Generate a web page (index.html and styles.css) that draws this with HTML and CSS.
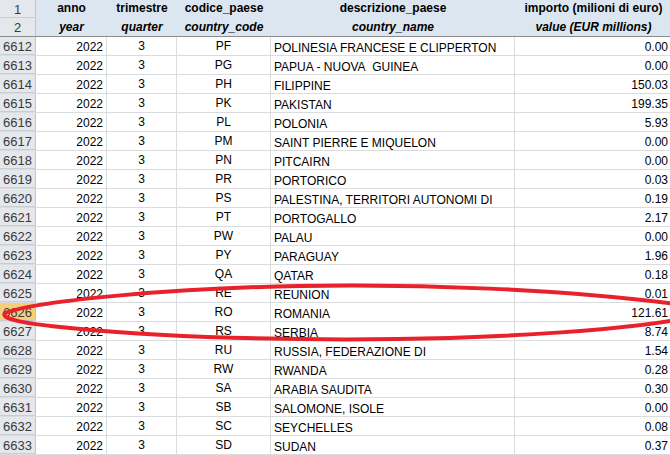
FILE: index.html
```html
<!DOCTYPE html>
<html>
<head>
<meta charset="utf-8">
<link rel="stylesheet" href="styles.css">
</head>
<body>
<div class="sheet">
  <div class="row head h1">
    <div class="rh">1</div>
    <div class="c">anno</div>
    <div class="c">trimestre</div>
    <div class="c">codice_paese</div>
    <div class="c">descrizione_paese</div>
    <div class="c">importo (milioni di euro)</div>
  </div>
  <div class="row head h2">
    <div class="rh">2</div>
    <div class="c">year</div>
    <div class="c">quarter</div>
    <div class="c">country_code</div>
    <div class="c">country_name</div>
    <div class="c">value (EUR millions)</div>
  </div>
  <div class="row"><div class="rh">6612</div><div class="r">2022</div><div class="m">3</div><div class="m">PF</div><div class="l">POLINESIA FRANCESE E CLIPPERTON</div><div class="r">0.00</div></div>
  <div class="row"><div class="rh">6613</div><div class="r">2022</div><div class="m">3</div><div class="m">PG</div><div class="l">PAPUA - NUOVA&nbsp; GUINEA</div><div class="r">0.00</div></div>
  <div class="row"><div class="rh">6614</div><div class="r">2022</div><div class="m">3</div><div class="m">PH</div><div class="l">FILIPPINE</div><div class="r">150.03</div></div>
  <div class="row"><div class="rh">6615</div><div class="r">2022</div><div class="m">3</div><div class="m">PK</div><div class="l">PAKISTAN</div><div class="r">199.35</div></div>
  <div class="row"><div class="rh">6616</div><div class="r">2022</div><div class="m">3</div><div class="m">PL</div><div class="l">POLONIA</div><div class="r">5.93</div></div>
  <div class="row"><div class="rh">6617</div><div class="r">2022</div><div class="m">3</div><div class="m">PM</div><div class="l">SAINT PIERRE E MIQUELON</div><div class="r">0.00</div></div>
  <div class="row"><div class="rh">6618</div><div class="r">2022</div><div class="m">3</div><div class="m">PN</div><div class="l">PITCAIRN</div><div class="r">0.00</div></div>
  <div class="row"><div class="rh">6619</div><div class="r">2022</div><div class="m">3</div><div class="m">PR</div><div class="l">PORTORICO</div><div class="r">0.03</div></div>
  <div class="row"><div class="rh">6620</div><div class="r">2022</div><div class="m">3</div><div class="m">PS</div><div class="l">PALESTINA, TERRITORI AUTONOMI DI</div><div class="r">0.19</div></div>
  <div class="row"><div class="rh">6621</div><div class="r">2022</div><div class="m">3</div><div class="m">PT</div><div class="l">PORTOGALLO</div><div class="r">2.17</div></div>
  <div class="row"><div class="rh">6622</div><div class="r">2022</div><div class="m">3</div><div class="m">PW</div><div class="l">PALAU</div><div class="r">0.00</div></div>
  <div class="row"><div class="rh">6623</div><div class="r">2022</div><div class="m">3</div><div class="m">PY</div><div class="l">PARAGUAY</div><div class="r">1.96</div></div>
  <div class="row"><div class="rh">6624</div><div class="r">2022</div><div class="m">3</div><div class="m">QA</div><div class="l">QATAR</div><div class="r">0.18</div></div>
  <div class="row"><div class="rh">6625</div><div class="r">2022</div><div class="m">3</div><div class="m">RE</div><div class="l">REUNION</div><div class="r">0.01</div></div>
  <div class="row"><div class="rh sel">6626</div><div class="r">2022</div><div class="m">3</div><div class="m">RO</div><div class="l">ROMANIA</div><div class="r">121.61</div></div>
  <div class="row"><div class="rh">6627</div><div class="r">2022</div><div class="m">3</div><div class="m">RS</div><div class="l">SERBIA</div><div class="r">8.74</div></div>
  <div class="row"><div class="rh">6628</div><div class="r">2022</div><div class="m">3</div><div class="m">RU</div><div class="l">RUSSIA, FEDERAZIONE DI</div><div class="r">1.54</div></div>
  <div class="row"><div class="rh">6629</div><div class="r">2022</div><div class="m">3</div><div class="m">RW</div><div class="l">RWANDA</div><div class="r">0.28</div></div>
  <div class="row"><div class="rh">6630</div><div class="r">2022</div><div class="m">3</div><div class="m">SA</div><div class="l">ARABIA SAUDITA</div><div class="r">0.30</div></div>
  <div class="row"><div class="rh">6631</div><div class="r">2022</div><div class="m">3</div><div class="m">SB</div><div class="l">SALOMONE, ISOLE</div><div class="r">0.00</div></div>
  <div class="row"><div class="rh">6632</div><div class="r">2022</div><div class="m">3</div><div class="m">SC</div><div class="l">SEYCHELLES</div><div class="r">0.08</div></div>
  <div class="row"><div class="rh">6633</div><div class="r">2022</div><div class="m">3</div><div class="m">SD</div><div class="l">SUDAN</div><div class="r">0.37</div></div>
  <svg class="mark" width="680" height="455" viewBox="0 0 680 455">
    <path d="M 676 304 C 560 289, 420 284, 300 286 C 180 288, 40 300, 5 313 C 0 318, 20 323, 60 327 C 150 337, 300 342, 450 338 C 560 334, 630 328, 676 320" fill="none" stroke="#e8212b" stroke-width="4" stroke-linecap="round"/>
  </svg>
</div>
</body>
</html>
```
FILE: styles.css
```css
html, body {
  margin: 0;
  padding: 0;
  background: #ffffff;
  overflow: hidden;
}
.sheet {
  position: relative;
  width: 672px;
  font-family: "Liberation Sans", Arial, sans-serif;
  font-size: 12px;
  color: #000;
}
.row {
  display: grid;
  grid-template-columns: 36px 71px 70px 94px 244px 157px;
  height: 19px;
  box-sizing: border-box;
  border-bottom: 1px solid #dadcdd;
}
.row > div {
  box-sizing: border-box;
  border-right: 1px solid #dadcdd;
  line-height: 18px;
  padding: 0 3px;
  white-space: nowrap;
  overflow: hidden;
}
.rh {
  background: #e4e8ed;
  color: #3a3a3a;
  font-size: 13px;
  text-align: center;
  padding: 0 !important;
  border-right: 1px solid #c0c6ce !important;
  border-bottom: 1px solid #c9ced5;
  line-height: 19px !important;
}
.rh.sel {
  background: #f6cf7a;
  color: #3a3a3a;
}
.r { text-align: right; padding-top: 1px !important; }
.l { text-align: left; padding-top: 2px !important; }
.m { text-align: center; }
.head {
  border-bottom: none;
  height: 18px;
}
.head > .c {
  background: #dce6f1;
  border-right: none;
  text-align: center;
  font-weight: bold;
}
.h1 > div { line-height: 17px; }
.h2 {
  height: 19px;
  border-bottom: 1px solid #8c8c8c;
}
.h2 > .c { font-style: italic; }
.h2 > .rh { border-bottom: none; }
.mark {
  position: absolute;
  left: 0;
  top: 0;
  pointer-events: none;
}
```
